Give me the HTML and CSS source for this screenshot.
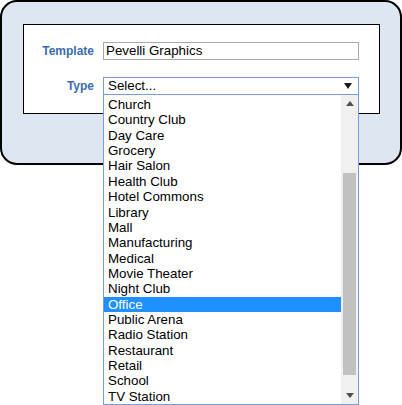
FILE: index.html
```html
<!DOCTYPE html>
<html>
<head>
<meta charset="utf-8">
<link rel="stylesheet" href="styles.css">
</head>
<body>
<div class="page">
  <div class="panel">
    <div class="form">
      <div class="form-grid">
        <label class="lbl">Template</label>
        <div class="input">Pevelli Graphics</div>
        <label class="lbl">Type</label>
        <div class="select">
          <span>Select...</span>
          <svg class="arrow" width="8" height="6" viewBox="0 0 8 6"><polygon points="0,0 8,0 4,6" fill="#1a1a1a"/></svg>
        </div>
      </div>
    </div>
  </div>
  <div class="popup">
    <ul class="items">
      <li>Church</li>
      <li>Country Club</li>
      <li>Day Care</li>
      <li>Grocery</li>
      <li>Hair Salon</li>
      <li>Health Club</li>
      <li>Hotel Commons</li>
      <li>Library</li>
      <li>Mall</li>
      <li>Manufacturing</li>
      <li>Medical</li>
      <li>Movie Theater</li>
      <li>Night Club</li>
      <li class="sel">Office</li>
      <li>Public Arena</li>
      <li>Radio Station</li>
      <li>Restaurant</li>
      <li>Retail</li>
      <li>School</li>
      <li>TV Station</li>
    </ul>
    <div class="scrollbar">
      <div class="sb-btn"><svg width="8" height="5" viewBox="0 0 8 5"><polygon points="0,5 8,5 4,0" fill="#505050"/></svg></div>
      <div class="sb-gap1"></div>
      <div class="sb-thumb"></div>
      <div class="sb-gap2"></div>
      <div class="sb-btn"><svg width="8" height="5" viewBox="0 0 8 5"><polygon points="0,0 8,0 4,5" fill="#505050"/></svg></div>
    </div>
  </div>
</div>
</body>
</html>
```
FILE: styles.css
```css
html, body {
  margin: 0;
  padding: 0;
  background: #ffffff;
}
body {
  font-family: "Liberation Sans", Arial, sans-serif;
  width: 402px;
  height: 405px;
  overflow: hidden;
}
.page {
  position: relative;
  width: 402px;
  height: 405px;
}
.panel {
  box-sizing: border-box;
  width: 402px;
  height: 165px;
  border: 2px solid #000;
  border-radius: 17px;
  background: #dee6f2;
  padding: 22px 0 0 21px;
}
.form {
  box-sizing: border-box;
  width: 357px;
  height: 90px;
  background: #fff;
  border: 1px solid #000;
  padding-top: 17px;
}
.form-grid {
  display: grid;
  grid-template-columns: 70px 256px;
  column-gap: 9px;
  row-gap: 17px;
  align-items: center;
}
.lbl {
  text-align: right;
  font-weight: bold;
  font-size: 12px;
  color: #3b6cae;
}
.input {
  box-sizing: border-box;
  height: 18px;
  border: 1px solid #a9a9a9;
  font-size: 13.333px;
  line-height: 16px;
  padding-left: 2px;
  color: #000;
  white-space: nowrap;
}
.select {
  box-sizing: border-box;
  height: 18px;
  border: 1px solid #7a9cd8;
  font-size: 13.333px;
  line-height: 16px;
  padding: 0 6px 0 4px;
  color: #000;
  display: flex;
  align-items: center;
  justify-content: space-between;
}
.arrow {
  display: block;
  margin-right: 0;
}
.popup {
  position: absolute;
  left: 103px;
  top: 94px;
  box-sizing: border-box;
  width: 256px;
  height: 311px;
  border: 1px solid #7a9cd8;
  background: #fff;
  display: flex;
}
.items {
  list-style: none;
  margin: 0;
  padding: 2px 0 0 0;
  flex: 1;
  overflow: hidden;
  font-size: 13.333px;
  line-height: 15.36px;
  color: #000;
}
.items li {
  padding-left: 4px;
  white-space: nowrap;
}
.items li.sel {
  background: #1e90ff;
  color: #fff;
}
.scrollbar {
  width: 17px;
  background: #f0f0f0;
  display: flex;
  flex-direction: column;
}
.sb-btn {
  height: 17px;
  display: flex;
  align-items: center;
  justify-content: center;
}
.sb-gap1 {
  height: 61px;
}
.sb-thumb {
  height: 202px;
  margin: 0 2px;
  background: #c1c1c1;
}
.sb-gap2 {
  height: 12px;
}
```
